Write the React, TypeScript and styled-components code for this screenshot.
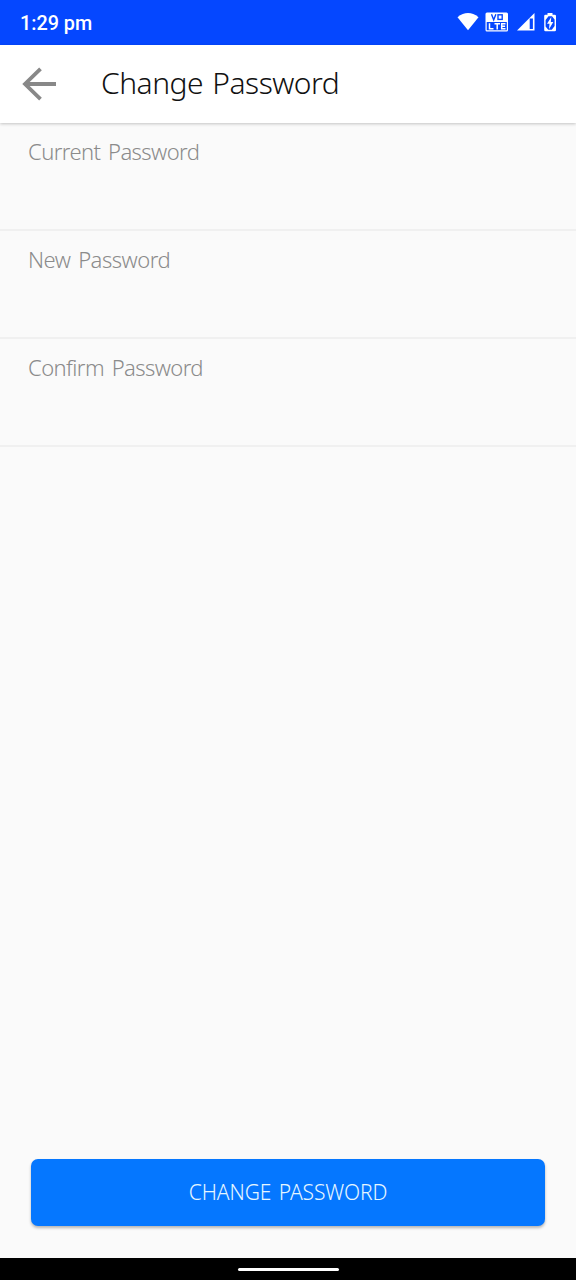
import React from "react";
import styled, { createGlobalStyle } from "styled-components";

const GlobalStyle = createGlobalStyle`
  * { box-sizing: border-box; }
  body { margin: 0; background: #fafafa; }
`;

const Screen = styled.div`
  display: flex;
  flex-direction: column;
  width: 576px;
  height: 1280px;
  background: #fafafa;
  font-family: "Noto Sans", "Open Sans", sans-serif;
  font-weight: 300;
  overflow: hidden;
`;

const StatusBar = styled.div`
  display: flex;
  align-items: center;
  justify-content: space-between;
  flex: none;
  height: 45px;
  padding: 0 19px 0 20px;
  background: #0547ff;
  color: #fff;
`;

const Clock = styled.span`
  font: 500 19.8px/24px Roboto, sans-serif;
  padding-top: 3px;
`;

const StatusIcons = styled.svg`
  display: block;
  width: 100px;
  height: 45px;
`;

const Header = styled.header`
  display: flex;
  align-items: center;
  flex: none;
  height: 78px;
  padding-left: 22px;
  background: #fff;
  box-shadow: 0 1px 3px rgba(0, 0, 0, 0.22);
`;

const BackIcon = styled.svg`
  display: block;
  width: 34px;
  height: 36px;
`;

const Title = styled.h1`
  margin: 0 0 3px 45px;
  font-size: 30px;
  font-weight: 300;
  line-height: 40px;
  letter-spacing: -0.5px;
  word-spacing: 2px;
  color: #111;
  white-space: nowrap;
`;

const Form = styled.form`
  display: flex;
  flex-direction: column;
  flex: 1;
`;

const Field = styled.label`
  height: 108px;
  padding: 13px 28px 0;
  border-bottom: 2px solid #f0f0f0;
`;

const FieldName = styled.span<{ $spacing: number }>`
  display: block;
  font-size: 22px;
  line-height: 30px;
  letter-spacing: ${(p) => p.$spacing}px;
  word-spacing: 2.5px;
  color: #8b8b8b;
  white-space: nowrap;
`;

const SubmitButton = styled.button`
  display: flex;
  align-items: center;
  justify-content: center;
  height: 67px;
  margin: auto 31px 32px;
  padding: 0 0 2px;
  border: 0;
  border-radius: 7px;
  background: #0577ff;
  box-shadow: 0 2px 3px rgba(0, 0, 0, 0.28);
  color: #e6f6ff;
  font: 300 21px/30px "Noto Sans", "Open Sans", sans-serif;
  letter-spacing: -0.1px;
  word-spacing: 2px;
  white-space: nowrap;
`;

const NavBar = styled.div`
  display: flex;
  justify-content: center;
  flex: none;
  height: 22px;
  padding-top: 10px;
  background: #000;
`;

const HomePill = styled.div`
  width: 101px;
  height: 3px;
  border-radius: 2px;
  background: #fff;
`;

export default function App() {
  return (
    <>
      <GlobalStyle />
      <Screen>
        <StatusBar>
          <Clock>1:29 pm</Clock>
          <StatusIcons viewBox="457 0 100 45" fill="#fff">
            <path d="M457.5 17.2Q468 9 478.500 17.200L468 30.300Z" />
            <path
              fillRule="evenodd"
              d="M487 12.500h19.500q1.500 0 1.500 1.500v16q0 1.500-1.500 1.500H487q-1.500 0-1.500-1.500V14q0-1.500 1.500-1.500ZM486.700 22v8.300h20.100V22Z"
            />
            <g fill="none" stroke="#0547ff" strokeWidth="1.400">
              <path d="M491.500 14.300l2.200 5.500 2.200-5.500" />
              <rect x="498" y="14.800" width="4.200" height="4.600" />
            </g>
            <path
              d="M489.500 23.200v5.600h4M494.500 23.800h5.500M497.200 23.800v5.600M505.500 23.800h-3.800v5h3.800M501.700 26.300h3.400"
              fill="none"
              stroke="#fff"
              strokeWidth="1.500"
            />
            <path fillRule="evenodd" d="M534.500 13v17.500H517Zm-1.600 5.500h-3.200v10.500h3.200Z" />
            <path
              fillRule="evenodd"
              d="M547.500 13h5v1.700h2.200q1.300 0 1.300 1.300v14q0 1.300-1.300 1.300h-9.200q-1.300 0-1.300-1.300V16q0-1.300 1.300-1.300h2ZM548.500 16.300L545.600 20v6.500l2.600 3.300h3.600l2.800-3.800v-6.500l-2.600-3.200Z"
            />
            <path d="M551.300 17l-4.300 6.800h2.500l-.5 5.400 4.300-7.200h-2.500Z" />
          </StatusIcons>
        </StatusBar>
        <Header>
          <BackIcon viewBox="0 0 34 36" fill="none" stroke="#888" strokeWidth="3.800">
            <path d="M34 18H3M18.500 2.800L3 18l15.500 15.200" />
          </BackIcon>
          <Title>Change Password</Title>
        </Header>
        <Form onSubmit={(e) => e.preventDefault()}>
          <Field><FieldName $spacing={-0.58}>Current Password</FieldName></Field>
          <Field><FieldName $spacing={-0.5}>New Password</FieldName></Field>
          <Field><FieldName $spacing={-0.58}>Confirm Password</FieldName></Field>
          <SubmitButton type="submit">CHANGE PASSWORD</SubmitButton>
        </Form>
        <NavBar><HomePill /></NavBar>
      </Screen>
    </>
  );
}
